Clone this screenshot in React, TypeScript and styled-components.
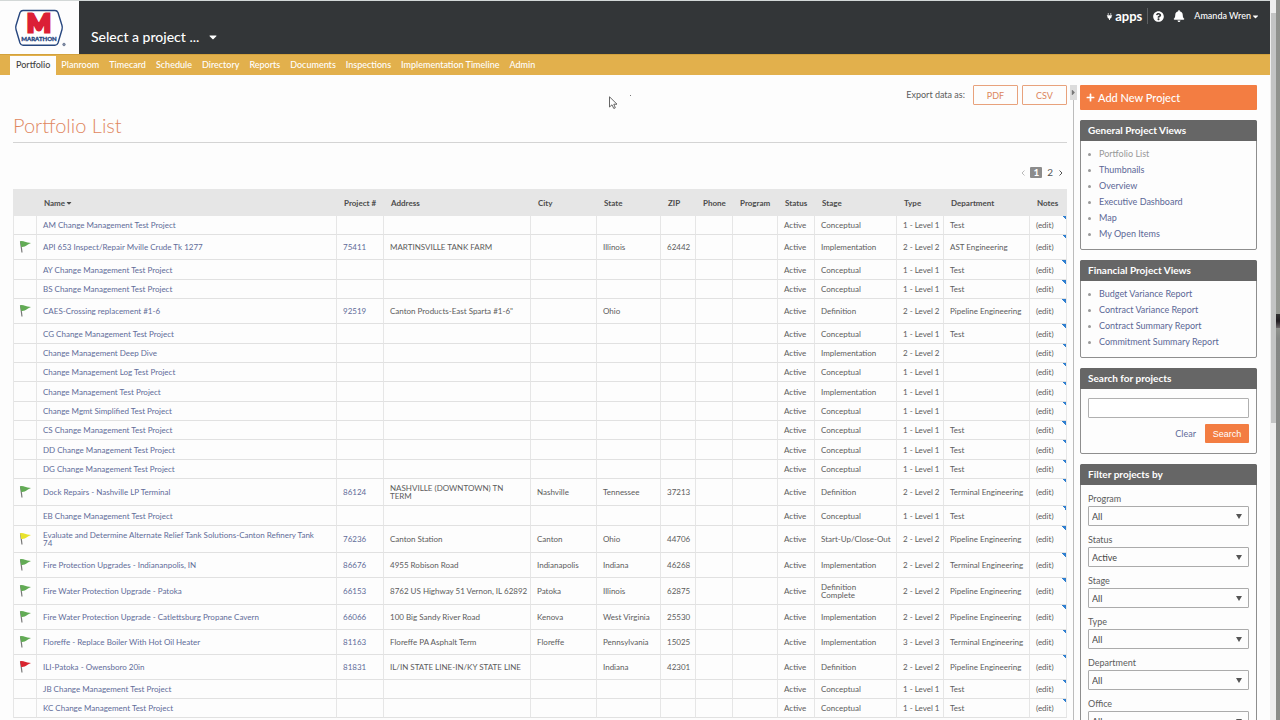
import React from "react";
import styled, { createGlobalStyle, css } from "styled-components";
import { FaPlug, FaQuestionCircle, FaBell, FaCaretDown, FaPlus, FaCaretRight } from "react-icons/fa";

const GlobalStyle = createGlobalStyle`
  * { box-sizing: border-box; }
  body {
    margin: 0;
    background: #fdfdfd;
    color: #5c5c5c;
    font-family: Lato, "Liberation Sans", sans-serif;
    font-size: 9px;
    line-height: 16px;
  }
  a { text-decoration: none; color: #616c99; }
  button, input, select { font-family: inherit; }
`;

const Shell = styled.div`
  display: flex;
  height: 100vh;
  overflow: hidden;
`;

const Page = styled.div`
  flex: 1;
  min-width: 0;
  border-top: 1px solid #d3d8d7;
`;

const ScrollTrack = styled.div`
  width: 6px;
  padding: 13px 0 0 1px;
  background: #eeeeee;
`;

const ScrollThumb = styled.div`
  height: 57vh;
  background: #c3c4c4;
`;

const DesktopEdge = styled.div`
  width: 4px;
  background: linear-gradient(#8e908c, #959892 45%, #858785 47%, #8b8d89);
  display: flex;
  align-items: center;
  padding-bottom: 78px;
`;

const Smudge = styled.div`
  width: 4px;
  height: 14px;
  background: linear-gradient(#333, #201c20 50%, #6b6668);
`;

const Header = styled.header`
  display: flex;
  height: 53px;
  background: #333638;
  color: #fff;
`;

const LogoBox = styled.a`
  width: 79px;
  background: #fdfdfd;
`;

const ProjectPicker = styled.button`
  align-self: flex-end;
  display: flex;
  align-items: center;
  gap: 8px;
  margin: 0 0 7px 12px;
  padding: 0;
  border: 0;
  background: none;
  color: #fff;
  font-size: 14px;
  font-weight: 500;
  line-height: 20px;
`;

const UserTools = styled.div`
  margin-left: auto;
  display: flex;
  align-items: center;
  height: 30px;
  padding-right: 10px;
`;

const ToolButton = styled.button<{ $strong?: boolean }>`
  display: flex;
  align-items: center;
  gap: 2px;
  padding: 0;
  border: 0;
  background: none;
  color: #fff;
  font-size: ${(p) => (p.$strong ? "13px" : "9px")};
  font-weight: ${(p) => (p.$strong ? 700 : 500)};
  line-height: 16px;
`;

const UserButton = styled(ToolButton)`
  gap: 0;
`;

const ToolDivider = styled.span`
  width: 1px;
  height: 16px;
  margin: 0 5px;
  background: #5c5f61;
`;

const ToolGap = styled.span`
  width: 9px;
`;

const Nav = styled.nav`
  display: flex;
  align-items: flex-end;
  height: 21px;
  padding-left: 10px;
  background: #e2b04c;
  border-top: 1px solid #d3a23c;
`;

const Tab = styled.a<{ $active?: boolean }>`
  height: 19px;
  padding: 0 ${(p) => (p.$active ? "6px" : "5px")};
  color: ${(p) => (p.$active ? "#444" : "#fff")};
  background: ${(p) => (p.$active ? "#fdfdfd" : "none")};
  font-weight: 500;
  line-height: 17px;
`;

const Columns = styled.div`
  display: flex;
  padding: 10px 13px 0;
`;

const Main = styled.main`
  flex: 1;
  min-width: 0;
`;

const ExportBar = styled.div`
  display: flex;
  justify-content: flex-end;
  align-items: center;
  gap: 4px;
  height: 20px;
`;

const ExportLabel = styled.span`
  margin-right: 4px;
`;

const OutlineButton = styled.button`
  width: 45px;
  height: 20px;
  padding: 0;
  border: 1px solid #e8a27c;
  border-radius: 1px;
  background: #fdfdfd;
  color: #dc855c;
  font-size: 9px;
`;

const Title = styled.h1`
  margin: 8px 0 0;
  padding-bottom: 5px;
  border-bottom: 1px solid #d4d4d4;
  color: #e0875f;
  font-size: 20px;
  font-weight: 300;
  line-height: 24px;
`;

const Pager = styled.div`
  display: flex;
  justify-content: flex-end;
  align-items: center;
  gap: 4px;
  height: 46px;
  padding: 15px 3px 2px 0;
`;

const PageLink = styled.a<{ $current?: boolean; $faint?: boolean }>`
  min-width: 5px;
  padding: 0 ${(p) => (p.$current ? "3px" : "1px")};
  border-radius: 1px;
  background: ${(p) => (p.$current ? "#8c8c8c" : "none")};
  color: ${(p) => (p.$current ? "#fff" : p.$faint ? "#bbb" : "#555")};
  font-size: 10px;
  font-weight: ${(p) => (p.$current ? 700 : 400)};
  line-height: 11px;
`;

const Chevron = styled.svg`
  display: block;
  width: 4px;
  height: 8px;
  fill: none;
  stroke: currentColor;
`;

const Table = styled.table`
  width: 100%;
  table-layout: fixed;
  border-collapse: separate;
  border-spacing: 0;
  border-left: 1px solid #e6e6e6;
  font-size: 8px;
  line-height: 8px;
`;

const Col = styled.col<{ $width?: number }>`
  ${(p) => p.$width && css`width: ${p.$width}px;`}
`;

const HeadCell = styled.th`
  height: 27px;
  padding: 0 0 0 7px;
  background: #e6e6e6;
  color: #4c4c4c;
  font-weight: 700;
  text-align: left;
  white-space: nowrap;
`;

const SortLabel = styled.button`
  display: flex;
  align-items: center;
  padding: 0;
  border: 0;
  background: none;
  color: inherit;
  font: inherit;
`;

const rowHeights = { plain: 19, flagged: 25, wrapped: 27 };

const Row = styled.tr<{ $kind: keyof typeof rowHeights }>`
  height: ${(p) => rowHeights[p.$kind]}px;
  ${(p) => p.$kind === "plain" && css`&:nth-child(3n) { height: 20px; }`}
`;

const Cell = styled.td`
  padding: 0 0 0 6px;
  border-right: 1px solid #e6e6e6;
  border-bottom: 1px solid #e1e1e1;
  vertical-align: middle;
  white-space: pre-line;
`;

const NameCell = styled(Cell)`
  padding-right: 16px;
`;

const TypeCell = styled(Cell)`
  white-space: nowrap;
`;

const FlagCell = styled(Cell)`
  padding: 0 0 2px 5px;
`;

const NotesCell = styled(Cell)`
  padding-left: 6px;
  background: linear-gradient(to top right, transparent 50%, #2f7fd0 50%) top right / 4px 4px no-repeat;
  a { color: #5c5c5c; }
`;

const FlagIcon = styled.svg`
  display: block;
  width: 12px;
  height: 13px;
`;

const Divider = styled.div`
  width: 13px;
  display: flex;
  flex-direction: column;
  align-items: center;
  min-height: 100vh;
`;

const CollapseButton = styled.button`
  display: flex;
  align-items: center;
  justify-content: center;
  width: 7px;
  height: 15px;
  padding: 0;
  border: 0;
  background: #dcdcdc;
  color: #777;
`;

const DividerLine = styled.div`
  flex: 1;
  width: 1px;
  background: #bcbcbc;
`;

const Sidebar = styled.aside`
  width: 177px;
  display: flex;
  flex-direction: column;
  gap: 10px;
`;

const AddButton = styled.button`
  display: flex;
  align-items: center;
  gap: 3px;
  height: 25px;
  padding: 0 6px;
  border: 0;
  border-radius: 1px;
  background: #f37d42;
  color: #fff;
  font-size: 11px;
  font-weight: 500;
`;

const Panel = styled.section`
  border: 1px solid #8e8e8e;
  border-radius: 2px;
`;

const PanelTitle = styled.h2`
  margin: -1px -1px 0;
  padding: 0 8px;
  border-radius: 2px 2px 0 0;
  background: #666;
  color: #fff;
  font-size: 10px;
  font-weight: 700;
  line-height: 21px;
`;

const LinkList = styled.ul`
  margin: 0;
  padding: 5px 0 7px 18px;
  list-style: none;
`;

const LinkItem = styled.li`
  position: relative;
  &::before {
    content: "";
    position: absolute;
    left: -11px;
    top: 7px;
    width: 3px;
    height: 3px;
    border-radius: 50%;
    background: #999;
  }
`;

const SideLink = styled.a<{ $current?: boolean }>`
  color: ${(p) => (p.$current ? "#999" : "#5b6796")};
`;

const SearchForm = styled.form`
  padding: 9px 7px 10px;
`;

const SearchInput = styled.input`
  display: block;
  width: 100%;
  height: 20px;
  padding: 0 4px;
  border: 1px solid #b0b0b0;
  border-radius: 1px;
  background: #fff;
  font-size: 9px;
`;

const FormActions = styled.div`
  display: flex;
  justify-content: flex-end;
  align-items: center;
  gap: 9px;
  margin-top: 6px;
`;

const SearchButton = styled.button`
  width: 44px;
  height: 19px;
  padding: 0;
  border: 0;
  border-radius: 1px;
  background: #f37d42;
  color: #fff;
  font-family: "Liberation Sans", sans-serif;
  font-size: 9px;
`;

const Filters = styled.div`
  display: flex;
  flex-direction: column;
  gap: 7px;
  padding: 7px 7px 10px;
`;

const Field = styled.label`
  display: block;
  font-size: 9px;
  line-height: 14px;
`;

const SelectWrap = styled.span`
  position: relative;
  display: block;
`;

const Select = styled.select`
  appearance: none;
  display: block;
  width: 100%;
  height: 20px;
  padding: 0 3px;
  border: 1px solid #ababab;
  border-radius: 1px;
  background: #fdfdfd;
  color: #444;
  font-size: 9px;
`;

const Arrow = styled.svg`
  position: absolute;
  right: 7px;
  top: 8px;
  width: 6px;
  height: 5px;
  fill: #555;
  pointer-events: none;
`;

const Pointer = styled.svg`
  position: absolute;
  left: 609px;
  top: 95px;
  width: 22px;
  height: 14px;
  pointer-events: none;
`;

type FlagColor = "green" | "yellow" | "red";
type Project = {
  name: string;
  flag?: FlagColor;
  number?: string;
  address?: string;
  city?: string;
  state?: string;
  zip?: string;
  stage: string;
  type: string;
  department?: string;
  wrapped?: boolean;
};

const L1 = "1 - Level 1";
const L2 = "2 - Level 2";
const test = (name: string, department: string | undefined = "Test"): Project => ({
  name, stage: "Conceptual", type: L1, department,
});

const projects: Project[] = [
  test("AM Change Management Test Project"),
  { name: "API 653 Inspect/Repair Mville Crude Tk 1277", flag: "green", number: "75411", address: "MARTINSVILLE TANK FARM", state: "Illinois", zip: "62442", stage: "Implementation", type: L2, department: "AST Engineering" },
  test("AY Change Management Test Project"),
  test("BS Change Management Test Project"),
  { name: "CAES-Crossing replacement #1-6", flag: "green", number: "92519", address: 'Canton Products-East Sparta #1-6"', state: "Ohio", stage: "Definition", type: L2, department: "Pipeline Engineering" },
  test("CG Change Management Test Project"),
  { name: "Change Management Deep Dive", stage: "Implementation", type: L2 },
  test("Change Management Log Test Project", ""),
  { name: "Change Management Test Project", stage: "Implementation", type: L1 },
  test("Change Mgmt Simplified Test Project", ""),
  test("CS Change Management Test Project"),
  test("DD Change Management Test Project"),
  test("DG Change Management Test Project"),
  { name: "Dock Repairs - Nashville LP Terminal", flag: "green", number: "86124", address: "NASHVILLE (DOWNTOWN) TN\nTERM", city: "Nashville", state: "Tennessee", zip: "37213", stage: "Definition", type: L2, department: "Terminal Engineering", wrapped: true },
  test("EB Change Management Test Project"),
  { name: "Evaluate and Determine Alternate Relief Tank Solutions-Canton Refinery Tank 74", flag: "yellow", number: "76236", address: "Canton Station", city: "Canton", state: "Ohio", zip: "44706", stage: "Start-Up/Close-Out", type: L2, department: "Pipeline Engineering", wrapped: true },
  { name: "Fire Protection Upgrades - Indiananpolis, IN", flag: "green", number: "86676", address: "4955 Robison Road", city: "Indianapolis", state: "Indiana", zip: "46268", stage: "Implementation", type: L2, department: "Terminal Engineering" },
  { name: "Fire Water Protection Upgrade - Patoka", flag: "green", number: "66153", address: "8762 US Highway 51 Vernon, IL 62892", city: "Patoka", state: "Illinois", zip: "62875", stage: "Definition\nComplete", type: L2, department: "Pipeline Engineering", wrapped: true },
  { name: "Fire Water Protection Upgrade - Catlettsburg Propane Cavern", flag: "green", number: "66066", address: "100 Big Sandy River Road", city: "Kenova", state: "West Virginia", zip: "25530", stage: "Implementation", type: L2, department: "Pipeline Engineering" },
  { name: "Floreffe - Replace Boiler With Hot Oil Heater", flag: "green", number: "81163", address: "Floreffe PA Asphalt Term", city: "Floreffe", state: "Pennsylvania", zip: "15025", stage: "Implementation", type: "3 - Level 3", department: "Terminal Engineering" },
  { name: "ILI-Patoka - Owensboro 20in", flag: "red", number: "81831", address: "IL/IN STATE LINE-IN/KY STATE LINE", state: "Indiana", zip: "42301", stage: "Definition", type: L2, department: "Pipeline Engineering" },
  test("JB Change Management Test Project"),
  test("KC Change Management Test Project"),
];

const columns: { label: string; width?: number }[] = [
  { label: "", width: 23 },
  { label: "Name" },
  { label: "Project #", width: 47 },
  { label: "Address", width: 147 },
  { label: "City", width: 66 },
  { label: "State", width: 64 },
  { label: "ZIP", width: 35 },
  { label: "Phone", width: 37 },
  { label: "Program", width: 45 },
  { label: "Status", width: 37 },
  { label: "Stage", width: 82 },
  { label: "Type", width: 47 },
  { label: "Department", width: 86 },
  { label: "Notes", width: 37 },
];

const tabs = ["Portfolio", "Planroom", "Timecard", "Schedule", "Directory", "Reports", "Documents", "Inspections", "Implementation Timeline", "Admin"];
const generalViews = ["Portfolio List", "Thumbnails", "Overview", "Executive Dashboard", "Map", "My Open Items"];
const financialViews = ["Budget Variance Report", "Contract Variance Report", "Contract Summary Report", "Commitment Summary Report"];
const filters = [["Program", "All"], ["Status", "Active"], ["Stage", "All"], ["Type", "All"], ["Department", "All"], ["Office", "All"]];
const flagFill = { green: "#62ab55", yellow: "#e8e32c", red: "#d9252f" };

const Flag = ({ color }: { color: FlagColor }) => (
  <FlagIcon viewBox="0 0 12 13" role="img" aria-label={`${color} flag`}>
    <path d="M1.500 1.500 3 12.500" stroke="#777" strokeWidth="1.200" fill="none" />
    <path d="M1 1.200Q4 .8 6 1.800T12 3Q9 4 7.500 5.600T2.200 7Z" fill={flagFill[color]} />
  </FlagIcon>
);

const Logo = () => (
  <svg width="79" height="53" viewBox="0 1 79 53" role="img" aria-label="Marathon">
    <path d="M23 10.500H55Q57 10.500 58 12.500L62 25.500Q62.600 27.500 62 29.500L58 43Q57 45.300 55 45.300H23Q21 45.300 20 43L16 29.500Q15.400 27.500 16 25.500L20 12.500Q21 10.500 23 10.500Z" fill="#fff" stroke="#27477f" strokeWidth="1.400" />
    <text x="39" y="32" textAnchor="middle" fontFamily="Lato" fontWeight="900" fontSize="25" fill="#db1f36" stroke="#db1f36" strokeWidth="3">M</text>
    <text x="39" y="41" textAnchor="middle" fontFamily="Lato" fontWeight="900" fontSize="6" fill="#27477f" stroke="#27477f" strokeWidth=".3">MARATHON</text>
    <circle cx="64" cy="44.500" r="1.300" fill="#8792a8" stroke="#4d5d7e" strokeWidth=".6" />
  </svg>
);

const ViewsPanel = ({ title, views, current }: { title: string; views: string[]; current?: string }) => (
  <Panel>
    <PanelTitle>{title}</PanelTitle>
    <LinkList>
      {views.map((v) => (
        <LinkItem key={v}><SideLink href="#" $current={v === current}>{v}</SideLink></LinkItem>
      ))}
    </LinkList>
  </Panel>
);

const ProjectRow = ({ p }: { p: Project }) => (
  <Row $kind={p.wrapped ? "wrapped" : p.flag ? "flagged" : "plain"}>
    <FlagCell>{p.flag && <Flag color={p.flag} />}</FlagCell>
    <NameCell><a href="#">{p.name}</a></NameCell>
    <Cell>{p.number && <a href="#">{p.number}</a>}</Cell>
    <Cell>{p.address}</Cell>
    <Cell>{p.city}</Cell>
    <Cell>{p.state}</Cell>
    <Cell>{p.zip}</Cell>
    <Cell />
    <Cell />
    <Cell>Active</Cell>
    <Cell>{p.stage}</Cell>
    <TypeCell>{p.type}</TypeCell>
    <Cell>{p.department}</Cell>
    <NotesCell><a href="#">(edit)</a></NotesCell>
  </Row>
);

export default function App() {
  return (
    <>
      <GlobalStyle />
      <Shell>
        <Page>
          <Header>
            <LogoBox href="#"><Logo /></LogoBox>
            <ProjectPicker>Select a project ... <FaCaretDown size={12} /></ProjectPicker>
            <UserTools>
              <ToolButton $strong><FaPlug size={7} />apps</ToolButton>
              <ToolDivider />
              <ToolButton aria-label="Help"><FaQuestionCircle size={11} /></ToolButton>
              <ToolGap />
              <ToolButton aria-label="Notifications"><FaBell size={12} /></ToolButton>
              <ToolGap />
              <UserButton>Amanda Wren<FaCaretDown size={9} /></UserButton>
            </UserTools>
          </Header>
          <Nav>
            {tabs.map((t, i) => <Tab key={t} href="#" $active={i === 0}>{t}</Tab>)}
          </Nav>
          <Columns>
            <Main>
              <ExportBar>
                <ExportLabel>Export data as:</ExportLabel>
                <OutlineButton>PDF</OutlineButton>
                <OutlineButton>CSV</OutlineButton>
              </ExportBar>
              <Title>Portfolio List</Title>
              <Pager>
                <PageLink href="#" $faint aria-label="Previous page"><Chevron viewBox="0 0 4 8"><path d="M3.500 1.500 1 4l2.500 2.500" /></Chevron></PageLink>
                <PageLink href="#" $current>1</PageLink>
                <PageLink href="#">2</PageLink>
                <PageLink href="#" aria-label="Next page"><Chevron viewBox="0 0 4 8"><path d="M.5 1.500 3 4 .5 6.500" /></Chevron></PageLink>
              </Pager>
              <Table>
                <colgroup>{columns.map((c) => <Col key={c.label} $width={c.width} />)}</colgroup>
                <thead>
                  <tr>
                    {columns.map((c) => (
                      <HeadCell key={c.label}>
                        {c.label === "Name" ? <SortLabel>Name<FaCaretDown size={8} /></SortLabel> : c.label}
                      </HeadCell>
                    ))}
                  </tr>
                </thead>
                <tbody>{projects.map((p) => <ProjectRow key={p.name} p={p} />)}</tbody>
              </Table>
            </Main>
            <Divider>
              <CollapseButton aria-label="Collapse sidebar"><FaCaretRight size={9} /></CollapseButton>
              <DividerLine />
            </Divider>
            <Sidebar>
              <AddButton><FaPlus size={9} />Add New Project</AddButton>
              <ViewsPanel title="General Project Views" views={generalViews} current="Portfolio List" />
              <ViewsPanel title="Financial Project Views" views={financialViews} />
              <Panel>
                <PanelTitle id="search-title">Search for projects</PanelTitle>
                <SearchForm>
                  <SearchInput type="text" aria-labelledby="search-title" />
                  <FormActions>
                    <a href="#">Clear</a>
                    <SearchButton type="button">Search</SearchButton>
                  </FormActions>
                </SearchForm>
              </Panel>
              <Panel>
                <PanelTitle>Filter projects by</PanelTitle>
                <Filters>
                  {filters.map(([label, value]) => (
                    <Field key={label}>
                      {label}
                      <SelectWrap>
                        <Select defaultValue={value}><option>{value}</option></Select>
                        <Arrow viewBox="0 0 6 5"><path d="M0 0H6L3 5Z" /></Arrow>
                      </SelectWrap>
                    </Field>
                  ))}
                </Filters>
              </Panel>
            </Sidebar>
          </Columns>
        </Page>
        <ScrollTrack><ScrollThumb /></ScrollTrack>
        <DesktopEdge><Smudge /></DesktopEdge>
      </Shell>
      <Pointer viewBox="0 0 22 14">
        <path d="M.5 1.800V12L3 9.800 4.800 13.500 6.300 12.800 4.800 9.200H8Z" fill="#fff" stroke="#555" strokeWidth=".9" />
        <rect x="21" y="0" width="1" height="1" fill="#777" />
      </Pointer>
    </>
  );
}
